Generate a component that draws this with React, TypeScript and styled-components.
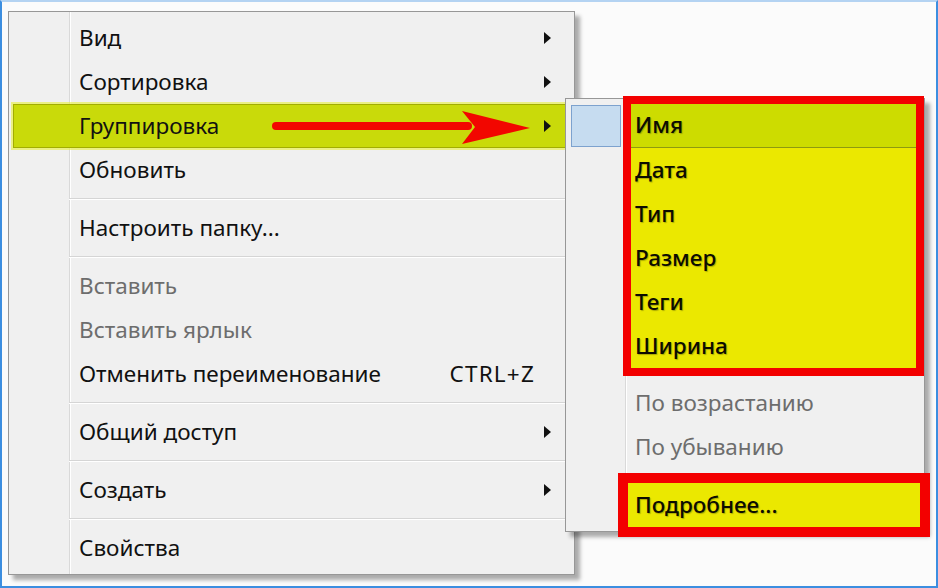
import styled, { createGlobalStyle } from 'styled-components';

const GlobalStyle = createGlobalStyle`
  html, body {
    margin: 0;
    padding: 0;
  }
  body {
    background: #fbfbfb;
    font-family: "Noto Sans", "Open Sans", sans-serif;
  }
`;

const Screen = styled.div`
  position: relative;
  width: 938px;
  height: 588px;
  box-sizing: border-box;
  background: #fbfbfb;
  border: 2px solid #3c8ee0;
  border-top-color: #b4d3f2;
  padding: 9px 0 0 6px;
  overflow: hidden;
`;

const Menu = styled.div`
  width: 567px;
  height: 564px;
  box-sizing: border-box;
  border: 1px solid #979797;
  background:
    linear-gradient(to right, transparent 60px, #d9d9d9 60px, #d9d9d9 61px, #fff 61px, #fff 62px, transparent 62px),
    #f0f0f0;
  box-shadow: 5px 5px 4px rgba(0, 0, 0, 0.32);
  padding: 4px 0;
`;

const Row = styled.div<{ $hot?: boolean; $disabled?: boolean }>`
  height: 44px;
  box-sizing: border-box;
  margin: 0 3px 0 4px;
  padding: 0 19px 2px 65px;
  display: flex;
  align-items: center;
  font-size: 22.5px;
  color: ${(p) => (p.$disabled ? '#6d6d6d' : '#111')};
  border: 1px solid ${(p) => (p.$hot ? '#a2ad00' : 'transparent')};
  background: ${(p) => (p.$hot ? '#c9da0a' : 'transparent')};
  box-shadow: ${(p) => (p.$hot ? '0 0 0 2px rgba(232, 240, 60, 0.6)' : 'none')};
`;

const Label = styled.span`
  flex: 1;
  white-space: nowrap;
`;

const Shortcut = styled.span`
  margin-right: 16px;
  letter-spacing: 1.2px;
  white-space: nowrap;
`;

const Caret = styled.span`
  width: 0;
  height: 0;
  margin-top: 2px;
  border-left: 7px solid #111;
  border-top: 6px solid transparent;
  border-bottom: 6px solid transparent;
`;

const Separator = styled.div<{ $indent: number }>`
  height: 1px;
  margin: 6px 2px 6px ${(p) => p.$indent}px;
  background: #d5d5d5;
  border-bottom: 1px solid #fff;
`;

const SubMenu = styled.div`
  position: absolute;
  left: 563px;
  top: 96px;
  width: 360px;
  height: 434px;
  box-sizing: border-box;
  border: 1px solid #979797;
  background:
    linear-gradient(to right, transparent 59px, #d9d9d9 59px, #d9d9d9 60px, #fff 60px, #fff 61px, transparent 61px),
    #f0f0f0;
  box-shadow: 5px 5px 4px rgba(0, 0, 0, 0.32);
  padding: 5px 0 4px;
  display: flex;
  flex-direction: column;
`;

const Section = styled.div`
  display: flex;
`;

const MarkColumn = styled.div<{ $width: number }>`
  width: ${(p) => p.$width}px;
  flex-shrink: 0;
`;

const Mark = styled.div`
  margin: 1px 0 0 5px;
  width: 50px;
  height: 42px;
  box-sizing: border-box;
  border: 1px solid #7da2ce;
  background: #c6dcf0;
`;

const Callout = styled.div<{ $ring: number; $right: number }>`
  position: relative;
  z-index: 1;
  flex: 1;
  margin-right: ${(p) => p.$right}px;
  background: #ebe800;
  box-shadow: 0 0 0 ${(p) => p.$ring}px #f30000;
`;

const SubRow = styled.div<{ $hot?: boolean; $disabled?: boolean; $pad: number }>`
  height: 44px;
  box-sizing: border-box;
  display: flex;
  align-items: center;
  padding: 0 0 2px ${(p) => p.$pad}px;
  font-size: 22.5px;
  white-space: nowrap;
  color: ${(p) => (p.$disabled ? '#6d6d6d' : '#0c0c00')};
  font-weight: ${(p) => (p.$disabled ? 400 : 500)};
  text-shadow: ${(p) => (p.$disabled ? 'none' : '1px 1px 1px rgba(60, 60, 0, 0.35)')};
  background: ${(p) => (p.$hot ? '#cddc00' : 'transparent')};
  border-bottom: ${(p) => (p.$hot ? '1px solid #8e9a10' : 'none')};
`;

const PlainRows = styled.div`
  padding-left: 69px;
  display: flex;
  flex-direction: column;
`;

const Pointer = styled.svg`
  position: absolute;
  left: 266px;
  top: 103px;
  z-index: 2;
`;

const mainTop = [
  { label: 'Вид', sub: true },
  { label: 'Сортировка', sub: true },
  { label: 'Группировка', sub: true, hot: true },
  { label: 'Обновить' },
];

const groupBy = ['Дата', 'Тип', 'Размер', 'Теги', 'Ширина'];

export default function App() {
  return (
    <>
      <GlobalStyle />
      <Screen>
        <Menu>
          {mainTop.map((item) => (
            <Row key={item.label} $hot={item.hot}>
              <Label>{item.label}</Label>
              {item.sub && <Caret />}
            </Row>
          ))}
          <Separator $indent={60} />
          <Row>
            <Label>Настроить папку...</Label>
          </Row>
          <Separator $indent={60} />
          <Row $disabled>
            <Label>Вставить</Label>
          </Row>
          <Row $disabled>
            <Label>Вставить ярлык</Label>
          </Row>
          <Row>
            <Label>Отменить переименование</Label>
            <Shortcut>CTRL+Z</Shortcut>
          </Row>
          <Separator $indent={60} />
          <Row>
            <Label>Общий доступ</Label>
            <Caret />
          </Row>
          <Separator $indent={60} />
          <Row>
            <Label>Создать</Label>
            <Caret />
          </Row>
          <Separator $indent={60} />
          <Row>
            <Label>Свойства</Label>
          </Row>
        </Menu>

        <Pointer width="266" height="44" viewBox="0 0 266 44">
          <line x1="8" y1="21" x2="200" y2="21" stroke="#f20600" strokeWidth="8" strokeLinecap="round" />
          <path d="M194 6 L262 23 L194 39 L207 22 Z" fill="#f20600" />
        </Pointer>

        <SubMenu>
          <Section>
            <MarkColumn $width={65}>
              <Mark />
            </MarkColumn>
            <Callout $ring={8} $right={8}>
              <SubRow $hot $pad={4}>Имя</SubRow>
              {groupBy.map((g) => (
                <SubRow key={g} $pad={4}>
                  {g}
                </SubRow>
              ))}
            </Callout>
          </Section>
          <Separator $indent={59} />
          <PlainRows>
            <SubRow $disabled $pad={0}>По возрастанию</SubRow>
            <SubRow $disabled $pad={0}>По убыванию</SubRow>
          </PlainRows>
          <Separator $indent={59} />
          <Section>
            <MarkColumn $width={62} />
            <Callout $ring={10} $right={4}>
              <SubRow $pad={7}>Подробнее...</SubRow>
            </Callout>
          </Section>
        </SubMenu>
      </Screen>
    </>
  );
}
